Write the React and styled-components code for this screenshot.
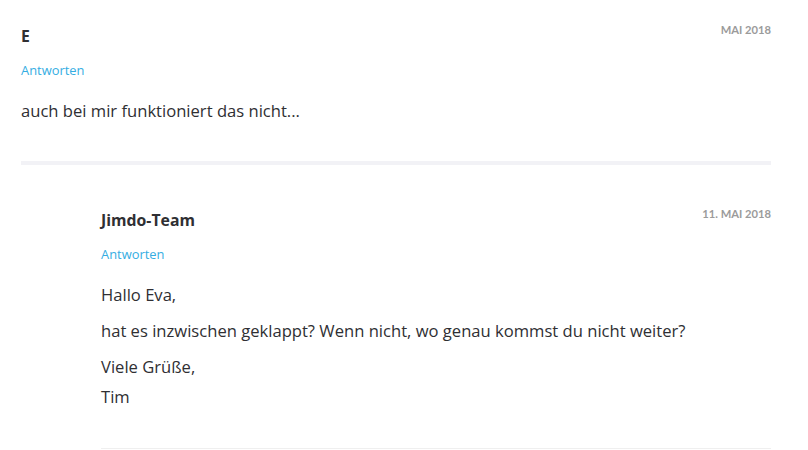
import React from "react";
import styled, { createGlobalStyle } from "styled-components";

const GlobalStyle = createGlobalStyle`
  body {
    margin: 0;
    background: #ffffff;
    font-family: "Open Sans", "Lato", sans-serif;
    color: #2f2f33;
  }
`;

const Page = styled.div`
  padding: 0 37px 0 21px;
`;

const Comment = styled.div`
  padding-top: ${(p) => (p.$reply ? "43px" : "24px")};
  padding-left: ${(p) => (p.$reply ? "80px" : "0")};
`;

const Header = styled.div`
  display: flex;
  justify-content: space-between;
  align-items: flex-start;
`;

const Name = styled.div`
  font-size: 15.8px;
  font-weight: 700;
  line-height: 24px;
  color: #2f2f33;
`;

const DateLabel = styled.div`
  font-family: "Lato", sans-serif;
  font-size: 11.2px;
  font-weight: 700;
  line-height: 12px;
  color: #9b9b9b;
  text-transform: uppercase;
`;

const Reply = styled.a`
  display: block;
  margin-top: 12px;
  font-size: 12.9px;
  line-height: 20px;
  color: #35ade2;
  text-decoration: none;
`;

const Body = styled.div`
  margin-top: 16px;

  p {
    margin: 0 0 6px;
    font-size: 16.6px;
    line-height: 30px;
  }
  p:last-child {
    margin-bottom: 0;
  }
`;

const ThickRule = styled.div`
  height: 4px;
  margin-top: 35px;
  background: #f2f2f6;
`;

const ThinRule = styled.div`
  height: 1px;
  margin-top: 36px;
  background: #efefef;
`;

export default function App() {
  return (
    <Page>
      <GlobalStyle />
      <Comment>
        <Header>
          <Name>E</Name>
          <DateLabel>Mai 2018</DateLabel>
        </Header>
        <Reply href="#">Antworten</Reply>
        <Body>
          <p>auch bei mir funktioniert das nicht...</p>
        </Body>
        <ThickRule />
      </Comment>
      <Comment $reply>
        <Header>
          <Name>Jimdo-Team</Name>
          <DateLabel>11. Mai 2018</DateLabel>
        </Header>
        <Reply href="#">Antworten</Reply>
        <Body>
          <p>Hallo Eva,</p>
          <p>hat es inzwischen geklappt? Wenn nicht, wo genau kommst du nicht weiter?</p>
          <p>
            Viele Grüße,
            <br />
            Tim
          </p>
        </Body>
        <ThinRule />
      </Comment>
    </Page>
  );
}
